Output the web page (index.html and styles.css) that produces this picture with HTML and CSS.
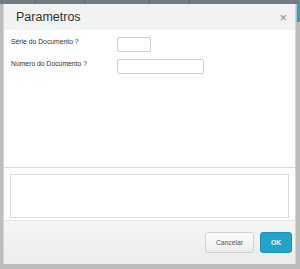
FILE: index.html
```html
<!DOCTYPE html>
<html lang="pt">
<head>
    <meta charset="UTF-8">
    <meta name="viewport" content="width=device-width, initial-scale=1.0">
    <title>Parametros</title>
    <link rel="stylesheet" href="styles.css">
</head>
<body>
    <div class="topbar">
        <span class="tab" style="width: 35px;"></span>
        <span class="tab" style="width: 48px;"></span>
        <span class="tab" style="width: 64px;"></span>
        <span class="tab" style="width: 39px;"></span>
        <span class="tab"></span>
    </div>

    <div class="stage">
        <div class="gutter"></div>

        <div class="dialog">
            <div class="dialog-header">
                <h1>Parametros</h1>
                <button class="close" type="button">&times;</button>
            </div>

            <form class="dialog-body">
                <div class="form-row">
                    <label for="serie">Série do Documento ?</label>
                    <input type="text" id="serie" class="field field-short">
                </div>
                <div class="form-row">
                    <label for="numero">Número do Documento ?</label>
                    <input type="text" id="numero" class="field field-long">
                </div>
            </form>

            <div class="dialog-notes">
                <div class="notes-box"></div>
            </div>

            <div class="dialog-footer">
                <button type="button" class="btn btn-cancel">Cancelar</button>
                <button type="button" class="btn btn-ok">OK</button>
            </div>
        </div>

        <div class="gutter gutter-right">
            <div class="side-accent"></div>
        </div>
    </div>
</body>
</html>
```

FILE: styles.css
```css
body {
    margin: 0;
    width: 300px;
    height: 269px;
    overflow: hidden;
    background-color: #bcbcbc;
    font-family: 'Liberation Sans', Arial, sans-serif;
}

.topbar {
    display: flex;
    height: 4px;
    background-color: #6f7c83;
}

.tab {
    border-right: 1px solid #5b676d;
}

.tab:last-child {
    flex: 1;
    border-right: none;
}

.stage {
    display: flex;
    height: 260px;
}

.gutter {
    width: 3px;
}

.gutter-right {
    width: 4px;
}

.side-accent {
    margin-left: 1px;
    height: 18px;
    background-color: #2aa3c7;
}

.dialog {
    flex: 1;
    display: flex;
    flex-direction: column;
    background-color: white;
    border-left: 1px solid #d6d6d6;
    border-right: 1px solid #d6d6d6;
}

.dialog-header {
    display: flex;
    align-items: center;
    justify-content: space-between;
    height: 26px;
    padding: 0 8px 0 12px;
    background-color: #f1f2f2;
}

.dialog-header h1 {
    margin: 0;
    font-size: 12.5px;
    font-weight: normal;
    color: #333;
}

.close {
    padding: 0;
    border: none;
    background: none;
    font-size: 13px;
    line-height: 1;
    color: #8a8f94;
    cursor: pointer;
}

.dialog-body {
    height: 138px;
    padding: 7px 0 0 7px;
    border-bottom: 1px solid #dcdcdc;
    box-sizing: border-box;
}

.form-row {
    display: flex;
    align-items: flex-start;
    margin-bottom: 7px;
}

.form-row label {
    width: 106px;
    padding-top: 1px;
    font-size: 6.8px;
    color: #333;
}

.field {
    height: 15px;
    padding: 0 3px;
    border: 1px solid #cfcfcf;
    border-radius: 2px;
    box-sizing: border-box;
}

.field-short {
    width: 34px;
}

.field-long {
    width: 87px;
}

.dialog-notes {
    padding: 6px 6px 2px 6px;
}

.notes-box {
    height: 44px;
    border: 1px solid #dcdcdc;
    box-sizing: border-box;
}

.dialog-footer {
    flex: 1;
    display: flex;
    justify-content: flex-end;
    align-items: center;
    gap: 6px;
    padding: 0 3px 0 0;
    border-top: 1px solid #e4e4e4;
    background: linear-gradient(#f4f5f5, #eceded);
}

.btn {
    height: 21px;
    border-radius: 3px;
    font-family: inherit;
    font-size: 6.8px;
    cursor: pointer;
}

.btn-cancel {
    width: 49px;
    border: 1px solid #d2d2d2;
    background: linear-gradient(#fdfdfd, #ececec);
    color: #555;
}

.btn-ok {
    width: 32px;
    border: 1px solid #1b93b9;
    background-color: #24a2c9;
    color: white;
    font-weight: bold;
}
```
